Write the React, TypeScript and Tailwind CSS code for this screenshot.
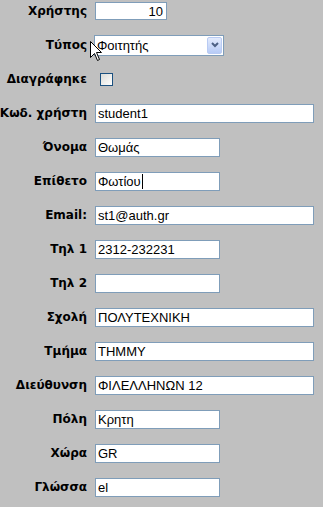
import React from "react";

type Row = { label: string; value?: string; width?: "short" | "long"; caret?: boolean };

const rows: Row[] = [
  { label: "Κωδ. χρήστη", value: "student1", width: "long" },
  { label: "Όνομα", value: "Θωμάς", width: "short" },
  { label: "Επίθετο", value: "Φωτίου", width: "short", caret: true },
  { label: "Email:", value: "st1@auth.gr", width: "long" },
  { label: "Τηλ 1", value: "2312-232231", width: "short" },
  { label: "Τηλ 2", value: "", width: "short" },
  { label: "Σχολή", value: "ΠΟΛΥΤΕΧΝΙΚΗ", width: "long" },
  { label: "Τμήμα", value: "ΤΗΜΜΥ", width: "long" },
  { label: "Διεύθυνση", value: "ΦΙΛΕΛΛΗΝΩΝ 12", width: "long" },
  { label: "Πόλη", value: "Κρητη", width: "short" },
  { label: "Χώρα", value: "GR", width: "short" },
  { label: "Γλώσσα", value: "el", width: "short" },
];

function Label({ children }: { children: React.ReactNode }) {
  return (
    <div className="w-[87px] shrink-0 flex justify-end whitespace-nowrap text-[12px] font-bold text-black font-['DejaVu_Sans',sans-serif] leading-none">
      <span>{children}</span>
    </div>
  );
}

function Field({ value, width, caret }: { value: string; width: string; caret?: boolean }) {
  return (
    <div
      className={`ml-[8px] h-[19px] border border-[#7f9db9] bg-white flex items-center pl-[2px] text-[13px] text-black font-['Liberation_Sans',Arial,sans-serif] leading-none ${width}`}
    >
      {value}
      {caret && <span className="ml-px inline-block h-[15px] w-px bg-black" />}
    </div>
  );
}

export default function App() {
  return (
    <div className="relative w-[323px] h-[507px] overflow-hidden bg-[#c0c0c0]">
      <div className="-mt-[6px] flex flex-col">
        <div className="flex h-[34px] items-center">
          <Label>Χρήστης</Label>
          <div className="ml-[8px] h-[18px] w-[72px] border border-[#7f9db9] bg-white flex items-center justify-end pr-[3px] text-[13px] text-black font-['Liberation_Sans',Arial,sans-serif] leading-none">
            10
          </div>
        </div>

        <div className="flex h-[34px] items-center">
          <Label>Τύπος</Label>
          <div className="ml-[7px] h-[21px] w-[130px] border border-[#7f9db9] bg-white flex items-center pl-[2px] text-[13px] text-black font-['Liberation_Sans',Arial,sans-serif] leading-none">
            <span className="flex-1">Φοιτητής</span>
            <div className="mr-px h-[17px] w-[15px] rounded-[2px] border border-[#b9cbf3] bg-gradient-to-b from-[#e3ebfd] to-[#b7cbf6] flex items-center justify-center">
              <svg width="8" height="6" viewBox="0 0 8 6">
                <path d="M1 1 L4 4 L7 1" fill="none" stroke="#4d6185" strokeWidth="2" />
              </svg>
            </div>
          </div>
        </div>

        <div className="flex h-[34px] items-center">
          <Label>Διαγράφηκε</Label>
          <div className="ml-[13px] h-[13px] w-[13px] border border-[#1c5180] bg-gradient-to-br from-[#dcdcd7] to-white" />
        </div>

        {rows.map((r) => (
          <div key={r.label} className="flex h-[34px] items-center">
            <Label>{r.label}</Label>
            <Field
              value={r.value ?? ""}
              caret={r.caret}
              width={r.width === "long" ? "w-[219px]" : "w-[125px]"}
            />
          </div>
        ))}
      </div>

      <svg className="absolute left-[90px] top-[41px]" width="13" height="21" viewBox="0 0 13 21">
        <path
          d="M0.5 0.5 L0.5 16.5 L4.5 12.5 L7.5 19.5 L9.5 18.5 L6.5 11.5 L11.5 11.5 Z"
          fill="white"
          stroke="black"
          strokeWidth="1"
        />
      </svg>
    </div>
  );
}
